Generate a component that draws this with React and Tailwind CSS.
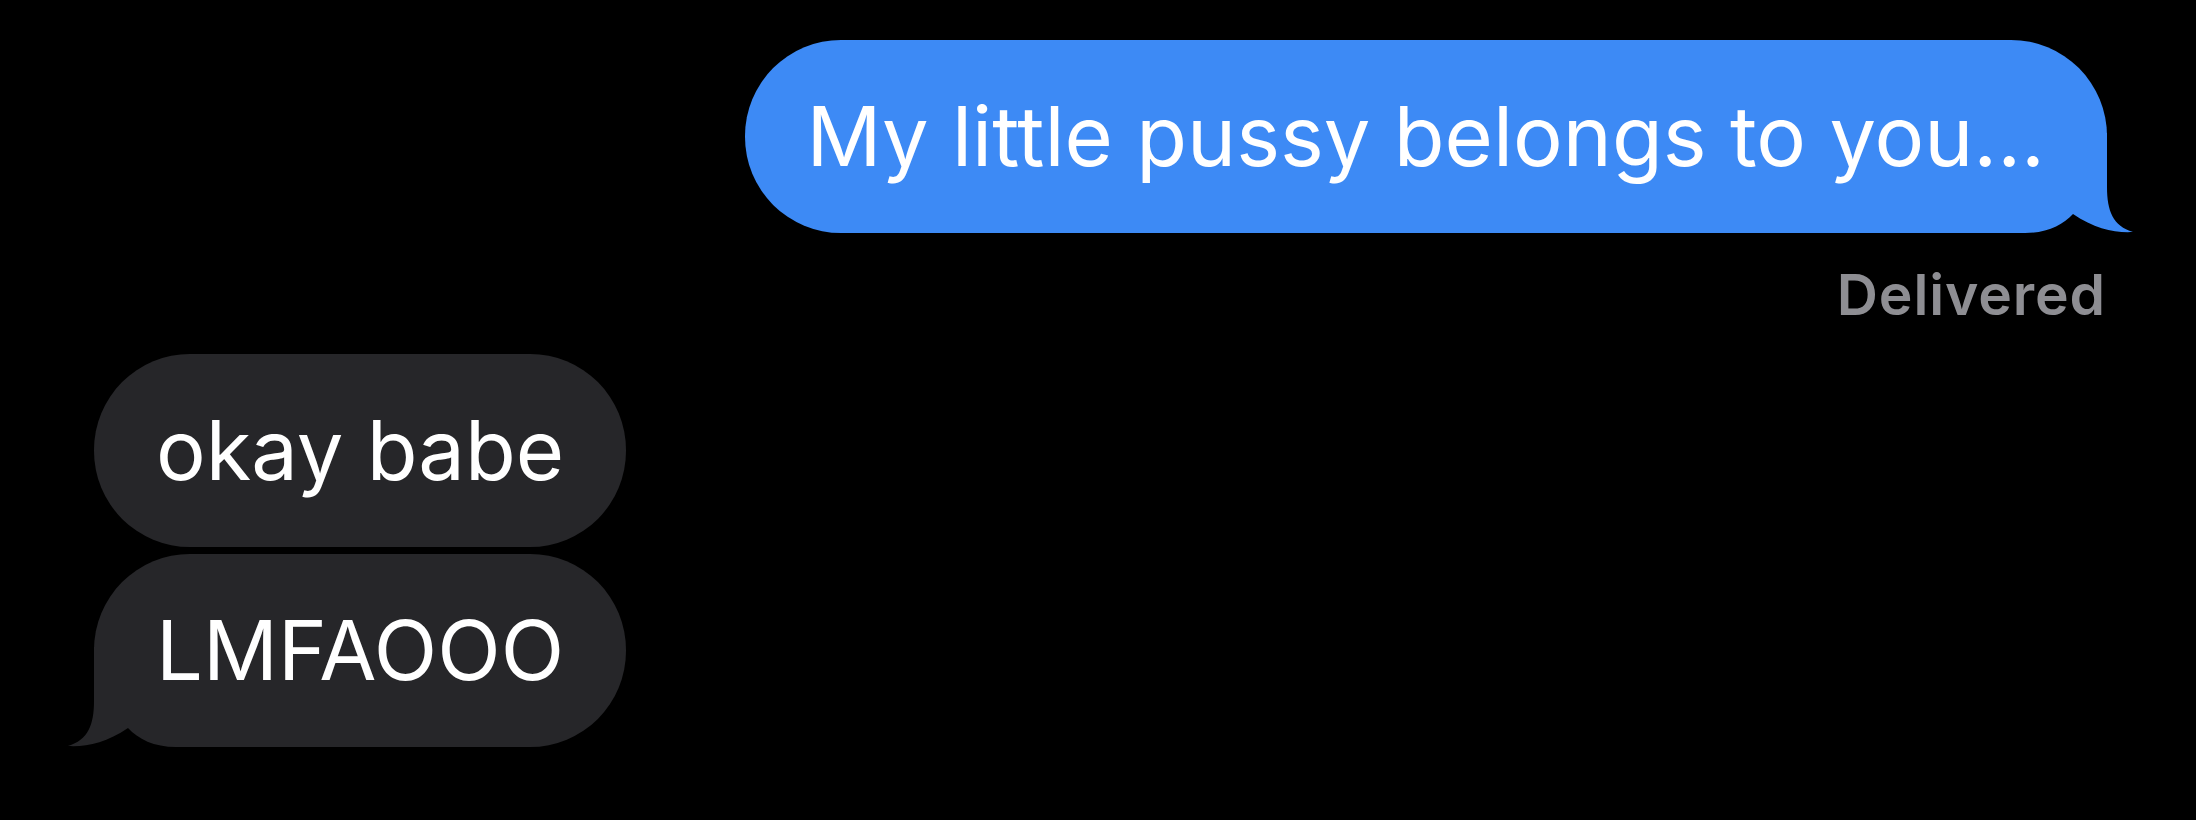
import React from "react";

const BLUE = "#3d8af5";
const GRAY = "#262629";

function Tail({ color, flip }) {
  // tail sits on the bottom corner of a bubble, tip points outward
  return (
    <svg
      width="130"
      height="100"
      viewBox="0 0 130 100"
      className={
        flip
          ? "absolute bottom-0 left-[-30px] -scale-x-100"
          : "absolute bottom-0 right-[-30px]"
      }
    >
      <path
        d="M0 0 L100 0 L100 54 C100 78 106 93 126 99 C108 100 88 96 66 81 C56 92 40 100 18 100 L0 100 Z"
        fill={color}
      />
    </svg>
  );
}

function Bubble({ text, color, tail, side }) {
  return (
    <div
      className="relative flex h-[193px] items-center rounded-[96px] px-[62px]"
      style={{ backgroundColor: color }}
    >
      <span className="relative z-10 whitespace-nowrap text-[83px] leading-none text-white">{text}</span>
      {tail && <Tail color={color} flip={side === "left"} />}
    </div>
  );
}

export default function App() {
  return (
    <div
      className="flex h-[820px] w-[2196px] flex-col overflow-hidden bg-black pt-[40px]"
      style={{ fontFamily: "Inter, 'Noto Sans', sans-serif" }}
    >
      <div className="flex justify-end pr-[89px]">
        <Bubble text="My little pussy belongs to you..." color={BLUE} tail side="right" />
      </div>

      <div className="mt-[33px] flex justify-end pr-[90px]">
        <span className="text-[57px] font-semibold leading-none tracking-[0.015em] text-[#8e8e93]">Delivered</span>
      </div>

      <div className="mt-[31px] flex flex-col items-start gap-[7px] pl-[94px]">
        <Bubble text="okay babe" color={GRAY} />
        <Bubble text="LMFAOOO" color={GRAY} tail side="left" />
      </div>
    </div>
  );
}
